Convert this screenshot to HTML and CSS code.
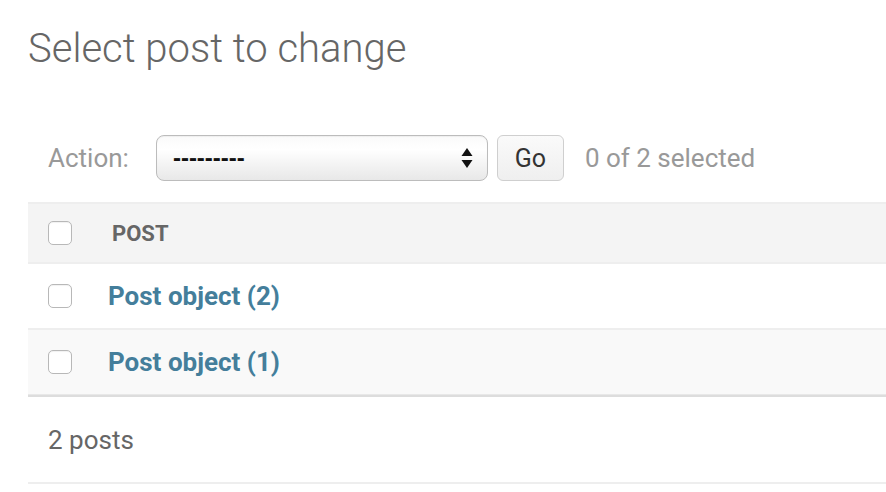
FILE: index.html
```html
<!DOCTYPE html>
<html>
<head>
<meta charset="utf-8">
<link rel="stylesheet" href="styles.css">
</head>
<body>
<div class="content">
  <h1 class="title">Select post to change</h1>
  <div class="actions">
    <span class="label">Action:</span>
    <div class="select">
      <span class="dashes">---------</span>
      <span class="arrows"><svg width="12" height="22" viewBox="0 0 12 22"><path d="M6 1 L11.5 9 L0.5 9 Z" fill="#111"/><path d="M6 21 L11.5 13 L0.5 13 Z" fill="#111"/></svg></span>
    </div>
    <div class="go">Go</div>
    <span class="counter">0 of 2 selected</span>
  </div>
  <div class="results">
    <div class="row head">
      <span class="cb"></span>
      <span class="colname">POST</span>
    </div>
    <div class="row odd">
      <span class="cb"></span>
      <a class="link">Post object (2)</a>
    </div>
    <div class="row even">
      <span class="cb"></span>
      <a class="link">Post object (1)</a>
    </div>
  </div>
  <div class="paginator">2 posts</div>
</div>
</body>
</html>
```
FILE: styles.css
```css
html, body {
  margin: 0;
  padding: 0;
  background: #fff;
}
body {
  font-family: Roboto, "Liberation Sans", sans-serif;
}
.content {
  padding-left: 28px;
}
.title {
  margin: 0;
  padding-top: 25px;
  height: 100px;
  box-sizing: border-box;
  font-size: 40px;
  font-weight: 300;
  color: #666;
  line-height: 48px;
}
.actions {
  display: flex;
  align-items: center;
  height: 102px;
  padding-left: 20px;
  padding-top: 14px;
  box-sizing: border-box;
}
.label {
  font-size: 26px;
  color: #999;
  margin-right: 27px;
}
.select {
  width: 332px;
  height: 46px;
  box-sizing: border-box;
  border: 1.5px solid #bcbcbc;
  border-radius: 8px;
  background: linear-gradient(#fafafa, #fff 30%, #e8e8e8);
  box-shadow: inset 0 1px 1px rgba(0,0,0,0.05);
  display: flex;
  align-items: center;
  justify-content: space-between;
  padding: 0 14px 0 16px;
}
.dashes {
  font-size: 24px;
  font-weight: 700;
  color: #111;
  font-family: "Liberation Sans", sans-serif;
}
.arrows {
  display: flex;
}
.go {
  margin-left: 9px;
  width: 67px;
  height: 46px;
  box-sizing: border-box;
  border: 1.5px solid #cfcfcf;
  border-radius: 6px;
  background: linear-gradient(#fafafa, #efefef);
  display: flex;
  align-items: center;
  justify-content: center;
  font-size: 25px;
  color: #333;
}
.counter {
  margin-left: 21px;
  font-size: 26px;
  color: #999;
}
.results {
  border-top: 2px solid #eee;
}
.row {
  display: flex;
  align-items: center;
  padding-left: 20px;
}
.head {
  height: 58px;
  background: #f4f4f4;
  border-bottom: 2px solid #eee;
}
.odd {
  height: 64px;
  background: #fff;
  border-bottom: 2px solid #eee;
}
.even {
  height: 64px;
  background: #f9f9f9;
  border-bottom: 1px solid #e8e8e8;
}
.cb {
  width: 24px;
  height: 24px;
  box-sizing: border-box;
  border: 1.5px solid #b8b8b8;
  border-radius: 5px;
  background: #fff;
  box-shadow: inset 0 1px 1px rgba(0,0,0,0.06);
}
.colname {
  margin-left: 40px;
  font-size: 22px;
  font-weight: 700;
  color: #666;
}
.link {
  margin-left: 36px;
  font-size: 26px;
  font-weight: 700;
  color: #447e9b;
}
.paginator {
  border-top: 2px solid #ddd;
  border-bottom: 2px solid #eee;
  height: 85px;
  padding-left: 20px;
  display: flex;
  align-items: center;
  font-size: 26px;
  color: #666;
}
```
